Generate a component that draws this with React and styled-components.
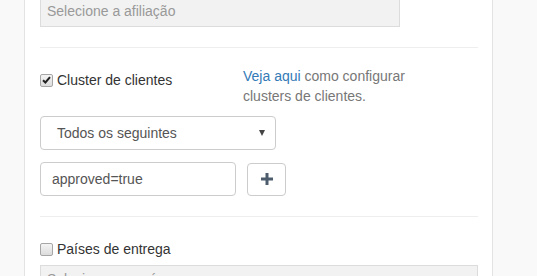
import React from "react";
import styled, { createGlobalStyle } from "styled-components";

const GlobalStyle = createGlobalStyle`
  body {
    margin: 0;
    background: #f9f9f9;
    font-family: "Liberation Sans", Arial, sans-serif;
    font-size: 14px;
    line-height: 20px;
    color: #333;
  }
`;

const Panel = styled.div`
  margin: -3px 0 0 24px;
  width: 438px;
  padding: 0 14px 20px 15px;
  background: #fff;
  border-left: 1px solid #e3e3e3;
  border-right: 1px solid #e3e3e3;
`;

const GrayBox = styled.div`
  height: 27px;
  padding: 1px 6px 0;
  line-height: 24px;
  background: #f2f2f2;
  border: 1px solid #dcdcdc;
  color: #999;
  overflow: hidden;
  white-space: nowrap;
  width: ${(p) => (p.$full ? "424px" : "346px")};
  margin-top: ${(p) => p.$top || 0}px;
`;

const Divider = styled.hr`
  border: 0;
  border-top: 1px solid #eee;
  margin: ${(p) => p.$top}px 0 0;
`;

const Row = styled.div`
  display: grid;
  grid-template-columns: 203px 1fr;
  align-items: start;
  margin-top: 18px;
`;

const Label = styled.label`
  display: flex;
  align-items: center;
  gap: 4px;
  margin-top: ${(p) => p.$top || 0}px;
  color: #333;
`;

const Check = styled.span`
  box-sizing: border-box;
  width: 13px;
  height: 13px;
  border: 1px solid #a6a6a6;
  border-radius: 2px;
  background: linear-gradient(#f4f4f4, #dcdcdc);
  display: flex;
  align-items: center;
  justify-content: center;
`;

const Help = styled.p`
  margin: 0;
  width: 175px;
  color: #777;
`;

const Link = styled.a`
  color: #337ab7;
  text-decoration: none;
`;

const Select = styled.div`
  box-sizing: border-box;
  margin-top: 10px;
  width: 236px;
  height: 34px;
  padding: 0 10px 0 16px;
  border: 1px solid #ccc;
  border-radius: 4px;
  display: flex;
  align-items: center;
  justify-content: space-between;
  color: #555;
`;

const Caret = styled.span`
  width: 0;
  height: 0;
  border-left: 3px solid transparent;
  border-right: 3px solid transparent;
  border-top: 6px solid #444;
`;

const InputRow = styled.div`
  display: flex;
  align-items: center;
  gap: 11px;
  margin-top: 12px;
`;

const Input = styled.div`
  box-sizing: border-box;
  width: 196px;
  height: 34px;
  padding: 0 11px;
  border: 1px solid #ccc;
  border-radius: 4px;
  display: flex;
  align-items: center;
  color: #555;
`;

const Button = styled.button`
  box-sizing: border-box;
  width: 39px;
  height: 33px;
  padding: 0;
  border: 1px solid #ccc;
  border-radius: 4px;
  background: #fff;
  display: flex;
  align-items: center;
  justify-content: center;
`;

const Section = styled.div`
  margin-top: 22px;
`;

const CheckMark = () => (
  <svg width="9" height="8" viewBox="0 0 9 8">
    <path d="M1 4.2 L3.4 6.5 L8 1.2" fill="none" stroke="#222" strokeWidth="2" />
  </svg>
);

const Plus = () => (
  <svg width="12" height="12" viewBox="0 0 12 12">
    <rect x="4.5" y="0" width="3" height="12" fill="#4d5d6d" />
    <rect x="0" y="4.5" width="12" height="3" fill="#4d5d6d" />
  </svg>
);

const App = () => {
  return (
    <>
      <GlobalStyle />
      <Panel>
        <GrayBox>Selecione a afiliação</GrayBox>
        <Divider $top={20} />

        <Row>
          <Label $top={4}>
            <Check>
              <CheckMark />
            </Check>
            Cluster de clientes
          </Label>
          <Help>
            <Link href="#">Veja aqui</Link> como configurar clusters de
            clientes.
          </Help>
        </Row>

        <Select>
          Todos os seguintes
          <Caret />
        </Select>

        <InputRow>
          <Input>approved=true</Input>
          <Button>
            <Plus />
          </Button>
        </InputRow>

        <Divider $top={20} />

        <Section>
          <Label>
            <Check />
            Países de entrega
          </Label>
          <GrayBox $full $top={6}>
            Selecione um país
          </GrayBox>
        </Section>
      </Panel>
    </>
  );
};

export default App;
